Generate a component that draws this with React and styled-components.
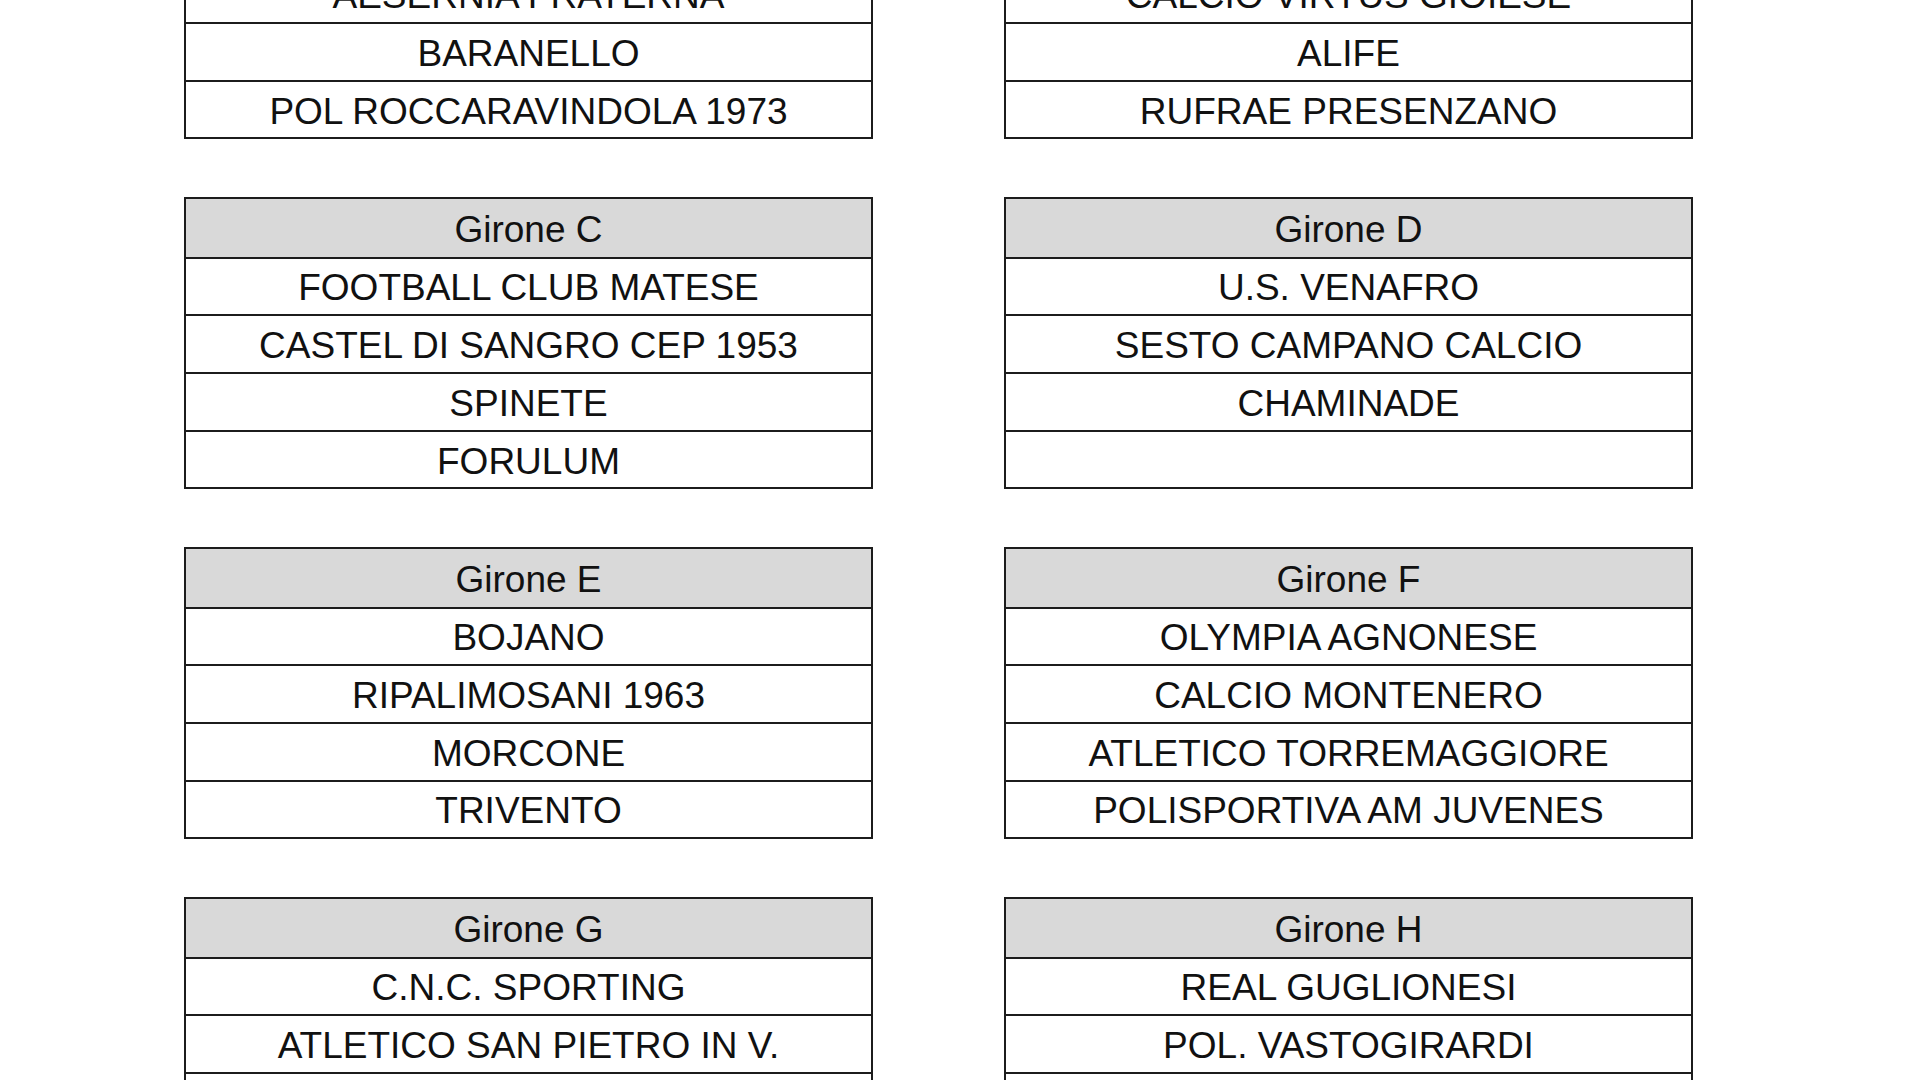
import React from "react";
import styled, { createGlobalStyle } from "styled-components";

const GlobalStyle = createGlobalStyle`
  html, body {
    margin: 0;
    padding: 0;
    background: #ffffff;
    overflow: hidden;
  }
  body {
    font-family: "Liberation Sans", Arial, sans-serif;
    color: #111111;
  }
`;

// the page is shown scrolled: the top of the first pair of tables is above the viewport
const Page = styled.div`
  display: grid;
  grid-template-columns: 689px 689px;
  column-gap: 131px;
  row-gap: 57.5px;
  padding-left: 184px;
  margin-top: -153px;
`;

const Group = styled.div`
  display: flex;
  flex-direction: column;
  border: 2px solid #1c1c1c;
`;

const Cell = styled.div`
  height: 57.7px;
  flex: none;
  display: flex;
  align-items: center;
  justify-content: center;
  font-size: 37px;
  line-height: 1;
  padding-top: 3px;
  box-sizing: border-box;
  white-space: nowrap;
  background: ${props => (props.head ? "#d9d9d9" : "#ffffff")};
  & + & {
    border-top: 2px solid #1c1c1c;
  }
`;

const groups = [
  { name: "Girone A", teams: ["", "AESERNIA FRATERNA", "BARANELLO", "POL ROCCARAVINDOLA 1973"] },
  { name: "Girone B", teams: ["", "CALCIO VIRTUS GIOIESE", "ALIFE", "RUFRAE PRESENZANO"] },
  { name: "Girone C", teams: ["FOOTBALL CLUB MATESE", "CASTEL DI SANGRO CEP 1953", "SPINETE", "FORULUM"] },
  { name: "Girone D", teams: ["U.S. VENAFRO", "SESTO CAMPANO CALCIO", "CHAMINADE", ""] },
  { name: "Girone E", teams: ["BOJANO", "RIPALIMOSANI 1963", "MORCONE", "TRIVENTO"] },
  { name: "Girone F", teams: ["OLYMPIA AGNONESE", "CALCIO MONTENERO", "ATLETICO TORREMAGGIORE", "POLISPORTIVA AM JUVENES"] },
  { name: "Girone G", teams: ["C.N.C. SPORTING", "ATLETICO SAN PIETRO IN V.", "", ""] },
  { name: "Girone H", teams: ["REAL GUGLIONESI", "POL. VASTOGIRARDI", "", ""] }
];

function GroupTable({ name, teams }) {
  return (
    <Group>
      <Cell head>{name}</Cell>
      {teams.map((t, i) => (
        <Cell key={i}>{t}</Cell>
      ))}
    </Group>
  );
}

export default function App() {
  return (
    <>
      <GlobalStyle />
      <Page>
        {groups.map(g => (
          <GroupTable key={g.name} name={g.name} teams={g.teams} />
        ))}
      </Page>
    </>
  );
}
